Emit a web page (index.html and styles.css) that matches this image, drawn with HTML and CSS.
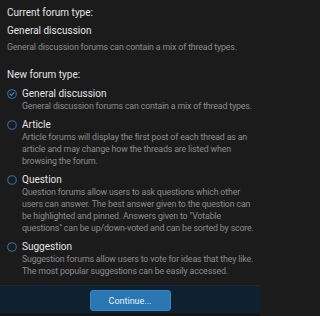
FILE: index.html
```html
<!DOCTYPE html>
<html>
<head>
<meta charset="utf-8">
<link rel="stylesheet" href="styles.css">
</head>
<body>
<div class="overlay">
  <div class="body">
    <div class="row">
      <div class="row-label">Current forum type:</div>
      <div class="row-value">
        <div class="value-title">General discussion</div>
        <div class="hint">General discussion forums can contain a mix of thread types.</div>
      </div>
    </div>
    <div class="row row-new">
      <div class="row-label">New forum type:</div>
      <ul class="choices">
        <li class="choice">
          <span class="radio checked">
            <svg viewBox="0 0 10 10" width="10" height="10"><circle cx="5" cy="5" r="4.3" fill="none" stroke="#2f6ea3" stroke-width="1.1"/><path d="M3 5.1 L4.4 6.5 L7.1 3.7" fill="none" stroke="#3d83bf" stroke-width="1.1" stroke-linecap="round" stroke-linejoin="round"/></svg>
          </span>
          <div class="choice-text">
            <div class="choice-label">General discussion</div>
            <div class="hint">General discussion forums can contain a mix of thread types.</div>
          </div>
        </li>
        <li class="choice">
          <span class="radio">
            <svg viewBox="0 0 10 10" width="10" height="10"><circle cx="5" cy="5" r="4.3" fill="none" stroke="#2f6ea3" stroke-width="1.1"/></svg>
          </span>
          <div class="choice-text">
            <div class="choice-label">Article</div>
            <div class="hint">Article forums will display the first post of each thread as an article and may change how the threads are listed when browsing the forum.</div>
          </div>
        </li>
        <li class="choice">
          <span class="radio">
            <svg viewBox="0 0 10 10" width="10" height="10"><circle cx="5" cy="5" r="4.3" fill="none" stroke="#2f6ea3" stroke-width="1.1"/></svg>
          </span>
          <div class="choice-text">
            <div class="choice-label">Question</div>
            <div class="hint">Question forums allow users to ask questions which other users can answer. The best answer given to the question can be highlighted and pinned. Answers given to "Votable questions" can be up/down-voted and can be sorted by score.</div>
          </div>
        </li>
        <li class="choice">
          <span class="radio">
            <svg viewBox="0 0 10 10" width="10" height="10"><circle cx="5" cy="5" r="4.3" fill="none" stroke="#2f6ea3" stroke-width="1.1"/></svg>
          </span>
          <div class="choice-text">
            <div class="choice-label">Suggestion</div>
            <div class="hint">Suggestion forums allow users to vote for ideas that they like. The most popular suggestions can be easily accessed.</div>
          </div>
        </li>
      </ul>
    </div>
  </div>
  <div class="footer">
    <button class="button">Continue...</button>
  </div>
  <div class="strip"></div>
</div>
</body>
</html>
```
FILE: styles.css
```css
html, body {
  margin: 0;
  padding: 0;
  background: #1b1b1c;
}
body {
  font-family: Roboto, "Liberation Sans", sans-serif;
  color: #e4e4e4;
  width: 260px;
  height: 316px;
  overflow: hidden;
}
.overlay {
  display: flex;
  flex-direction: column;
  height: 316px;
}
.body {
  flex: 1;
  min-height: 0;
  overflow: hidden;
  padding: 6px 2px 0 7px;
}
.row-label {
  font-size: 10px;
  line-height: 13px;
  color: #e4e4e4;
}
.row-value {
  margin-top: 5px;
}
.value-title {
  font-size: 10px;
  line-height: 13px;
}
.hint {
  font-size: 8.8px;
  letter-spacing: -0.15px;
  line-height: 12px;
  color: #8b8b8c;
}
.row-value .hint {
  margin-top: 4px;
}
.row-new {
  margin-top: 15px;
}
.choices {
  list-style: none;
  margin: 6px 0 0 0;
  padding: 0;
  display: flex;
  flex-direction: column;
  gap: 6px;
}
.choice {
  display: flex;
  align-items: flex-start;
}
.radio {
  width: 15px;
  flex: none;
  display: flex;
  padding-top: 1.5px;
}
.radio svg {
  display: block;
}
.choice-text {
  flex: 1;
}
.choice-label {
  font-size: 10px;
  line-height: 13px;
  color: #e4e4e4;
}
.footer {
  flex: none;
  height: 28px;
  background: #0f2131;
  border-top: 1px solid #162a3c;
  box-sizing: border-box;
  display: flex;
  justify-content: center;
  align-items: flex-start;
  padding-top: 4px;
}
.button {
  width: 81px;
  height: 21px;
  background: #2b77b4;
  border: 1px solid #3a86c2;
  border-radius: 3px;
  color: #e8f1fa;
  font-family: Roboto, "Liberation Sans", sans-serif;
  font-size: 9px;
  padding: 0;
}
.strip {
  flex: none;
  height: 3px;
  background: #161616;
}
```
